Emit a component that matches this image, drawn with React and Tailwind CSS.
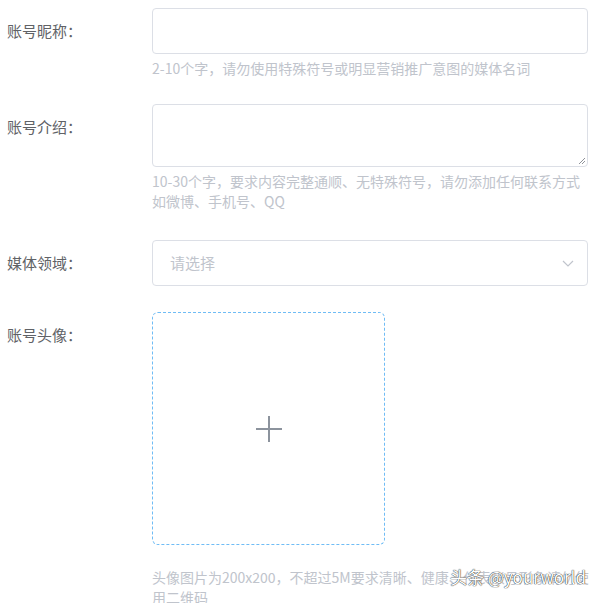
import React from 'react';

const font = { fontFamily: '"Microsoft YaHei", "Noto Sans CJK SC", "Noto Sans", sans-serif' };

const Row = ({ label, children, className = '' }) => (
  <div className={`flex ${className}`}>
    <div className="w-[152px] shrink-0 pl-[7px] text-[15px] leading-[46px] text-[#606266]">{label}</div>
    <div className="w-[436px]">{children}</div>
  </div>
);

const Hint = ({ children, className = '' }) => (
  <p className={`text-[14px] leading-[20px] text-[#c0c4cc] ${className}`}>{children}</p>
);

const App = () => {
  return (
    <div className="relative w-[600px] h-[603px] bg-white overflow-hidden" style={font}>
      <div className="pt-[8px]">
        <Row label="账号昵称：">
          <div className="h-[46px] rounded-[4px] border border-[#dcdfe6] bg-white" />
          <Hint className="mt-[4px]">2-10个字，请勿使用特殊符号或明显营销推广意图的媒体名词</Hint>
        </Row>

        <Row label="账号介绍：" className="mt-[26px]">
          <div className="relative h-[63px] rounded-[4px] border border-[#dcdfe6] bg-white">
            <svg className="absolute right-[1px] bottom-[1px]" width="9" height="9" viewBox="0 0 9 9">
              <path d="M8 2 L2 8 M8 5 L5 8" stroke="#909399" strokeWidth="1" fill="none" />
            </svg>
          </div>
          <Hint className="mt-[4px]">10-30个字，要求内容完整通顺、无特殊符号，请勿添加任何联系方式如微博、手机号、QQ</Hint>
        </Row>

        <Row label="媒体领域：" className="mt-[29px]">
          <div className="flex h-[46px] items-center justify-between rounded-[4px] border border-[#dcdfe6] bg-white pl-[17px] pr-[12px]">
            <span className="text-[15px] text-[#c0c4cc]">请选择</span>
            <svg width="14" height="14" viewBox="0 0 14 14">
              <path d="M2 5 L7 10 L12 5" stroke="#c0c4cc" strokeWidth="1.2" fill="none" />
            </svg>
          </div>
        </Row>

        <Row label="账号头像：" className="mt-[26px]">
          <div className="flex h-[233px] w-[233px] items-center justify-center rounded-[6px] border border-dashed border-[#6fbcf5] bg-white">
            <svg width="28" height="28" viewBox="0 0 28 28">
              <path d="M14 1 V27 M1 14 H27" stroke="#8c939d" strokeWidth="2" fill="none" />
            </svg>
          </div>
          <Hint className="mt-[22px] w-[444px]">头像图片为200x200，不超过5M要求清晰、健康、代表账号形象请勿使用二维码</Hint>
        </Row>
      </div>

      <div
        className="absolute right-[14px] bottom-[14px] text-[17px] text-white"
        style={{ textShadow: '0 0 1px rgba(0,0,0,0.9), 0 0 1px rgba(0,0,0,0.7)' }}
      >
        头条 @yourworld
      </div>
    </div>
  );
};

export default App;
